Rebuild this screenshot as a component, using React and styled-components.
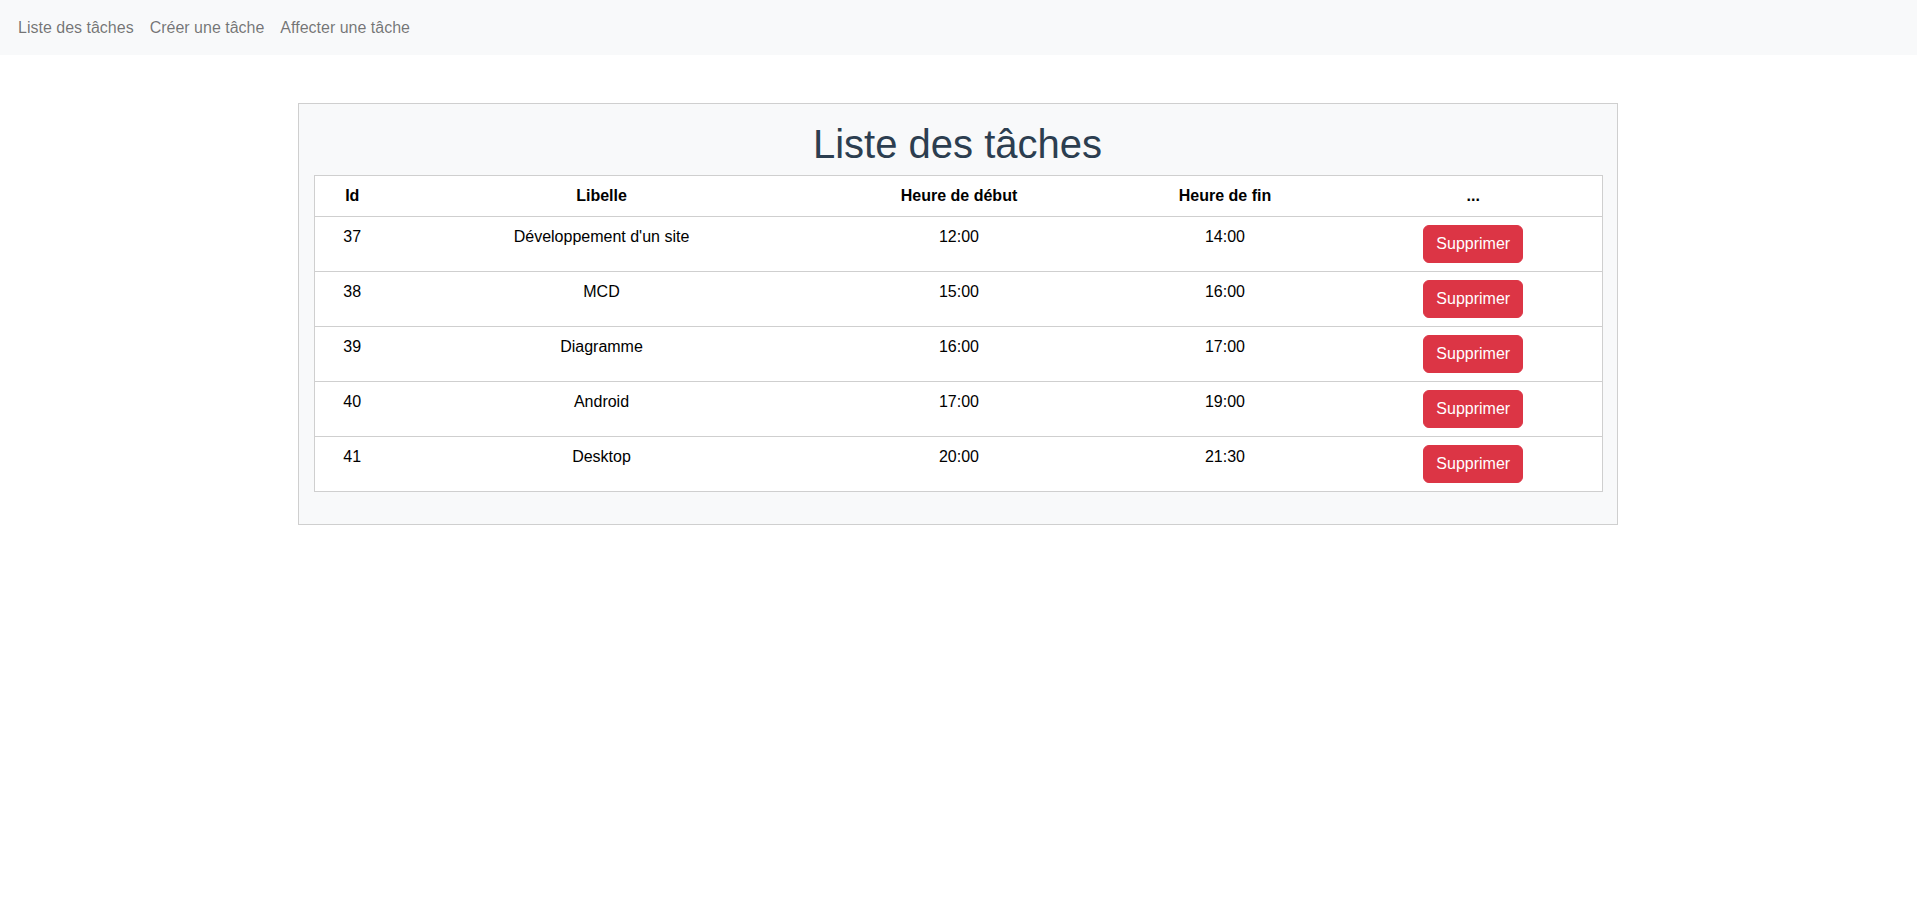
import React from "react";
import styled, { createGlobalStyle } from "styled-components";

const GlobalStyle = createGlobalStyle`
  * { box-sizing: border-box; }
  body {
    margin: 0;
    font-family: "Liberation Sans", Arial, sans-serif;
    font-size: 16px;
    line-height: 1.5;
    color: #212529;
    background: #fff;
  }
`;

const Navbar = styled.nav`
  height: 55px;
  background: #f8f9fa;
  display: flex;
  align-items: center;
  padding: 0 10px;
`;

const NavLink = styled.a`
  color: rgba(0, 0, 0, 0.55);
  text-decoration: none;
  padding: 0 8px;
  font-size: 16px;
  cursor: pointer;
`;

const Main = styled.main`
  display: flex;
  justify-content: center;
  padding: 48px 2px 0 0;
`;

const Card = styled.section`
  width: 1320px;
  background: #f8f9fa;
  border: 1px solid #cfcfcf;
  padding: 16px 17px 16px 15px;
`;

const Title = styled.h1`
  margin: 0 0 7px 2px;
  font-size: 40px;
  font-weight: 400;
  line-height: 1.2;
  text-align: center;
  color: #2c3e50;
`;

const Table = styled.table`
  width: 100%;
  border-collapse: collapse;
  table-layout: fixed;
  background: #fff;
  border: 1px solid #cfcfcf;
  margin-bottom: 16px;
`;

const Th = styled.th`
  width: ${p => p.$w}px;
  padding: 8px;
  font-weight: 700;
  text-align: center;
  color: #000;
  border-bottom: 1px solid #cfcfcf;
`;

const Row = styled.tr`
  border-bottom: 1px solid #cfcfcf;
`;

const Td = styled.td`
  padding: 8px;
  text-align: center;
  vertical-align: top;
  color: #000;
`;

const DeleteButton = styled.button`
  font-family: inherit;
  font-size: 16px;
  line-height: 1.5;
  padding: 6px 12px;
  color: #fff;
  background: #dc3545;
  border: 1px solid #dc3545;
  border-radius: 6px;
  cursor: pointer;
  margin-left: 0;
`;

const columns = [
  { label: "Id", w: 76 },
  { label: "Libelle", w: 423 },
  { label: "Heure de début", w: 292 },
  { label: "Heure de fin", w: 240 },
  { label: "...", w: 257 },
];

const taches = [
  { id: 37, libelle: "Développement d'un site", debut: "12:00", fin: "14:00" },
  { id: 38, libelle: "MCD", debut: "15:00", fin: "16:00" },
  { id: 39, libelle: "Diagramme", debut: "16:00", fin: "17:00" },
  { id: 40, libelle: "Android", debut: "17:00", fin: "19:00" },
  { id: 41, libelle: "Desktop", debut: "20:00", fin: "21:30" },
];

export default function App() {
  return (
    <>
      <GlobalStyle />
      <Navbar>
        <NavLink>Liste des tâches</NavLink>
        <NavLink>Créer une tâche</NavLink>
        <NavLink>Affecter une tâche</NavLink>
      </Navbar>
      <Main>
        <Card>
          <Title>Liste des tâches</Title>
          <Table>
            <thead>
              <tr>
                {columns.map(c => (
                  <Th key={c.label} $w={c.w}>{c.label}</Th>
                ))}
              </tr>
            </thead>
            <tbody>
              {taches.map(t => (
                <Row key={t.id}>
                  <Td>{t.id}</Td>
                  <Td>{t.libelle}</Td>
                  <Td>{t.debut}</Td>
                  <Td>{t.fin}</Td>
                  <Td><DeleteButton>Supprimer</DeleteButton></Td>
                </Row>
              ))}
            </tbody>
          </Table>
        </Card>
      </Main>
    </>
  );
}
